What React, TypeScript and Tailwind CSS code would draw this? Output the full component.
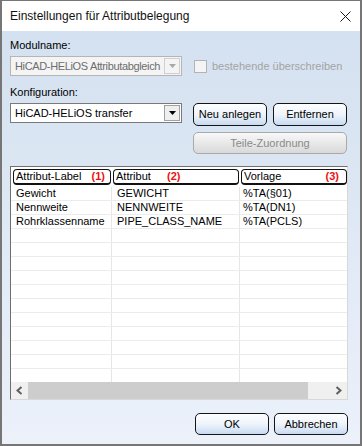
import type { ReactNode } from "react";

const rows = [
  ["Gewicht", "GEWICHT", "%TA(§01)"],
  ["Nennweite", "NENNWEITE", "%TA(DN1)"],
  ["Rohrklassenname", "PIPE_CLASS_NAME", "%TA(PCLS)"],
];

function Button({ children, disabled, className = "" }: { children: ReactNode; disabled?: boolean; className?: string }) {
  const look = disabled
    ? "border-[#a9a9a9] from-[#f8f8f8] to-[#d9d9d9] text-[#8a8a8a]"
    : "border-[#151515] from-[#fdfeff] via-[#eef4fb] to-[#c9dbf1] text-black";
  return (
    <div className={`flex items-center justify-center rounded-[5px] border bg-linear-to-b text-[11px] ${look} ${className}`}>
      {children}
    </div>
  );
}

function Arrow({ color }: { color: string }) {
  return (
    <svg width="7" height="4" viewBox="0 0 7 4">
      <path d="M0 0 H7 L3.5 4 Z" fill={color} />
    </svg>
  );
}

function Chevron({ right }: { right?: boolean }) {
  return (
    <svg width="7" height="9" viewBox="0 0 7 9">
      <path d={right ? "M1.5 1 L5.5 4.5 L1.5 8" : "M5.5 1 L1.5 4.5 L5.5 8"} fill="none" stroke="#5f5f5f" strokeWidth="2" />
    </svg>
  );
}

export default function App() {
  const filler = Array.from({ length: 14 }, (_, i) => rows[i] ?? ["", "", ""]);

  return (
    <div className="w-[362px] h-[446px] flex flex-col border-x-2 border-b-2 border-t border-[#767676] bg-white font-['Liberation_Sans',Arial,sans-serif] text-[11px] leading-[13px] text-black">
      {/* title bar */}
      <div className="h-[30px] shrink-0 flex items-center justify-between pl-[8px] pr-[9px] bg-white">
        <span className="text-[12px] text-[#111]">Einstellungen für Attributbelegung</span>
        <svg width="11" height="11" viewBox="0 0 11 11">
          <path d="M0.5 0.5 L10.5 10.5 M10.5 0.5 L0.5 10.5" stroke="#1a1a1a" strokeWidth="1" />
        </svg>
      </div>

      <div className="flex-1 flex flex-col bg-linear-to-b from-[#d4e1f0] to-[#ecf1fa] pl-[8px] pr-[12px] pt-[8px]">
        <div className="h-[13px]">Modulname:</div>

        <div className="mt-[4px] flex items-center">
          <div className="w-[172px] h-[20px] flex items-center border border-[#b5b5b5] bg-[#f4f4f4] p-[1px]">
            <span className="flex-1 pl-[3px] whitespace-nowrap overflow-hidden tracking-[-0.35px] text-[#6d6d6d]">HiCAD-HELiOS Attributabgleich</span>
            <div className="w-[16px] h-full shrink-0 flex items-center justify-center border border-[#d0d0d0] bg-[#f4f4f4]">
              <Arrow color="#a8a8a8" />
            </div>
          </div>
          <div className="ml-[12px] w-[13px] h-[13px] border border-[#b3b3b3] bg-[#f4f4f4]" />
          <span className="ml-[5px] text-[#a3a3a3]">bestehende überschreiben</span>
        </div>

        <div className="mt-[10px] h-[13px]">Konfiguration:</div>

        <div className="mt-[4px] flex items-start">
          <div className="w-[172px] h-[20px] flex items-center border border-[#7a7a7a] bg-white p-[1px]">
            <span className="flex-1 pl-[3px] whitespace-nowrap">HiCAD-HELiOS transfer</span>
            <div className="w-[16px] h-full shrink-0 flex items-center justify-center border border-[#a0a0a0] bg-[#efefef]">
              <Arrow color="#000" />
            </div>
          </div>
          <div className="ml-[11px] flex gap-[6px]">
            <Button className="w-[74px] h-[23px]">Neu anlegen</Button>
            <Button className="w-[74px] h-[23px]">Entfernen</Button>
          </div>
        </div>

        <Button disabled className="mt-[6px] ml-[183px] w-[154px] h-[22px]">Teile-Zuordnung</Button>

        {/* list */}
        <div className="mt-[12px] h-[234px] flex flex-col border border-t-[#6e6e6e] border-l-[#6e6e6e] border-r-[#d8d8d8] border-b-[#d8d8d8] bg-white">
          <div className="mt-[2px] flex h-[16px]">
            <div className="w-[101px] pl-[2px] pr-[1px]">
              <div className="h-full flex items-center justify-between rounded-[4px] border border-b-2 border-[#111] pl-[2px] pr-[5px]">
                <span>Attribut-Label</span>
                <span className="font-bold text-[#ee1111]">(1)</span>
              </div>
            </div>
            <div className="w-[128px] px-[1px]">
              <div className="h-full flex items-center rounded-[4px] border border-b-2 border-[#111] pl-[2px]">
                <span className="w-[51px]">Attribut</span>
                <span className="font-bold text-[#ee1111]">(2)</span>
              </div>
            </div>
            <div className="flex-1 pl-[1px]">
              <div className="h-full flex items-center justify-between rounded-[4px] border border-b-2 border-[#111] pl-[2px] pr-[7px]">
                <span>Vorlage</span>
                <span className="font-bold text-[#ee1111]">(3)</span>
              </div>
            </div>
          </div>

          <div className="mt-[2px] flex-1 overflow-hidden">
            {filler.map((r, i) => (
              <div key={i} className="flex h-[14px] border-b border-[#ececec] leading-[13px]">
                <div className="w-[101px] pl-[5px] border-r border-[#e6e6e6]">{r[0]}</div>
                <div className="w-[128px] pl-[5px] border-r border-[#e6e6e6]">{r[1]}</div>
                <div className="flex-1 pl-[3px]">{r[2]}</div>
              </div>
            ))}
          </div>

          <div className="h-[17px] flex bg-[#f0f0f0]">
            <div className="w-[17px] flex items-center justify-center">
              <Chevron />
            </div>
            <div className="w-[280px] bg-[#cdcdcd]" />
            <div className="flex-1" />
            <div className="w-[17px] flex items-center justify-center">
              <Chevron right />
            </div>
          </div>
        </div>

        <div className="mt-[13px] flex justify-end gap-[5px]">
          <Button className="w-[74px] h-[22px]">OK</Button>
          <Button className="w-[74px] h-[22px]">Abbrechen</Button>
        </div>
      </div>
    </div>
  );
}
